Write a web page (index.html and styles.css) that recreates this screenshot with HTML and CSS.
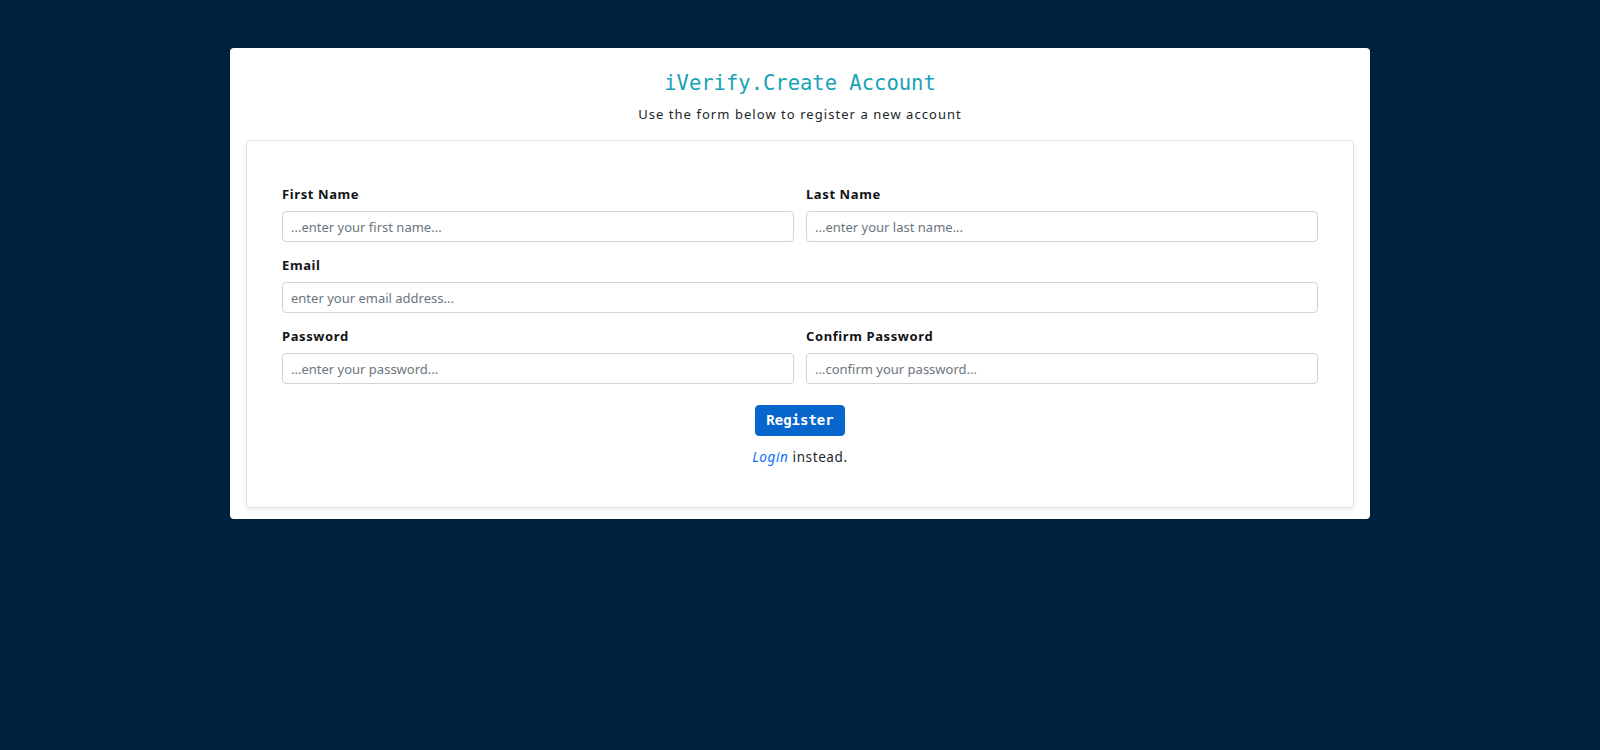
FILE: index.html
```html
<!DOCTYPE html>
<html lang="en">
<head>
<meta charset="utf-8">
<title>iVerify - Create Account</title>
<link rel="stylesheet" href="styles.css">
</head>
<body>
  <main class="container">
    <header class="head">
      <h1 class="title">iVerify.Create Account</h1>
      <p class="subtitle">Use the form below to register a new account</p>
    </header>
    <section class="panel">
      <form class="form">
        <div class="row">
          <div class="field">
            <label class="label" for="fn">First Name</label>
            <input class="input" id="fn" type="text" placeholder="...enter your first name...">
          </div>
          <div class="field">
            <label class="label" for="ln">Last Name</label>
            <input class="input" id="ln" type="text" placeholder="...enter your last name...">
          </div>
        </div>
        <div class="row single">
          <div class="field">
            <label class="label" for="em">Email</label>
            <input class="input" id="em" type="email" placeholder="enter your email address...">
          </div>
        </div>
        <div class="row">
          <div class="field">
            <label class="label" for="pw">Password</label>
            <input class="input" id="pw" type="password" placeholder="...enter your password...">
          </div>
          <div class="field">
            <label class="label" for="cpw">Confirm Password</label>
            <input class="input" id="cpw" type="password" placeholder="...confirm your password...">
          </div>
        </div>
        <div class="actions">
          <button class="btn" type="button">Register</button>
          <p class="alt"><a class="link" href="#">Login</a> instead.</p>
        </div>
      </form>
    </section>
  </main>
</body>
</html>
```
FILE: styles.css
```css
* { box-sizing: border-box; }
html, body { margin: 0; padding: 0; }
body {
  background: #012141;
  font-family: "Noto Sans", "Open Sans", sans-serif;
  color: #212529;
  min-height: 750px;
  padding-top: 48px;
}
.container {
  width: 1140px;
  margin: 0 auto;
  background: #ffffff;
  border-radius: 4px;
  padding: 16px 16px 11px;
}
.head {
  text-align: center;
}
.title {
  margin: 0;
  font-family: "DejaVu Sans Mono", "Liberation Mono", monospace;
  font-weight: 400;
  font-size: 20.5px;
  line-height: 30px;
  color: #17a2b8;
  padding-top: 4px;
}
.subtitle {
  margin: 6px 0 0;
  font-size: 13px;
  line-height: 20px;
  letter-spacing: 1.05px;
  color: #212529;
}
.panel {
  margin-top: 16px;
  border: 1px solid #dee2e6;
  border-radius: 4px;
  box-shadow: 0 2px 4px rgba(0, 0, 0, 0.075);
  padding: 44px 35px 40px;
}
.form {
  display: flex;
  flex-direction: column;
  gap: 14px;
}
.row {
  display: grid;
  grid-template-columns: 1fr 1fr;
  column-gap: 12px;
}
.row.single {
  grid-template-columns: 1fr;
}
.field {
  display: flex;
  flex-direction: column;
}
.label {
  font-size: 13px;
  line-height: 19.5px;
  font-weight: 700;
  letter-spacing: 0.6px;
  margin-bottom: 6.5px;
  color: #111318;
}
.input {
  height: 31px;
  border: 1px solid #ced4da;
  border-radius: 4px;
  padding: 4px 8px;
  font-family: "Noto Sans", "Open Sans", sans-serif;
  font-size: 13px;
  color: #212529;
  background: #fff;
}
.input::placeholder {
  color: #6c757d;
}
.actions {
  display: flex;
  flex-direction: column;
  align-items: center;
  margin-top: 7px;
}
.btn {
  height: 31px;
  padding: 0 10px;
  border: 1px solid #0766cc;
  border-radius: 4px;
  background: #0766cc;
  color: #ffffff;
  font-family: "DejaVu Sans Mono", "Liberation Mono", monospace;
  font-weight: 700;
  font-size: 14px;
  line-height: 29px;
}
.alt {
  margin: 11px 0 0;
  font-size: 13.5px;
  line-height: 20px;
  letter-spacing: 0.6px;
  color: #212529;
}
.link {
  color: #0d6efd;
  font-style: italic;
  text-decoration: none;
}
```
